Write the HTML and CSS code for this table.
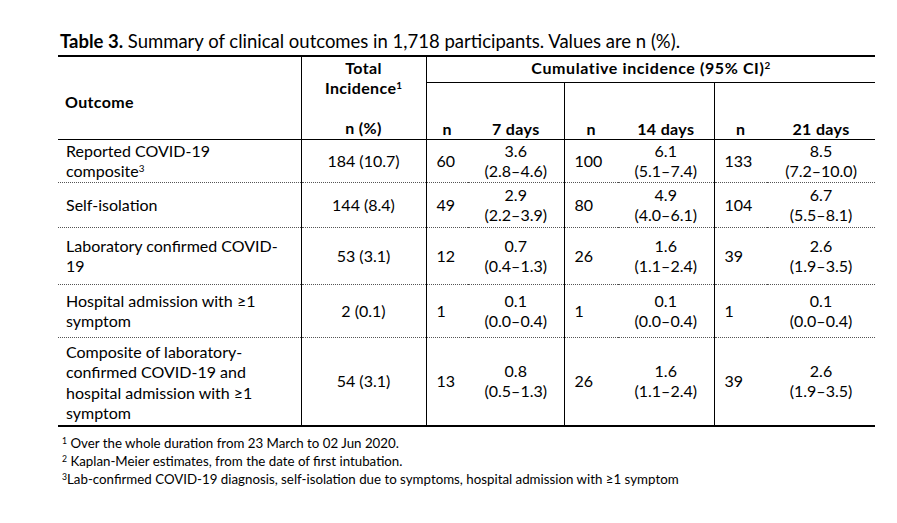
FILE: index.html
```html
<!DOCTYPE html>
<html lang="en">
<head>
<meta charset="utf-8">
<title>Table 3</title>
<link rel="stylesheet" href="styles.css">
</head>
<body>
<div class="page">
  <p class="caption"><b>Table 3.</b> Summary of clinical outcomes in 1,718 participants. Values are n (%).</p>
  <table class="outcomes">
    <colgroup>
      <col class="c-outcome">
      <col class="c-total">
      <col class="c-n7">
      <col class="c-d7">
      <col class="c-n14">
      <col class="c-d14">
      <col class="c-n21">
      <col class="c-d21">
    </colgroup>
    <thead>
      <tr class="h1">
        <th rowspan="2" class="th-outcome">Outcome</th>
        <th rowspan="2" class="th-total vl">Total<br>Incidence<sup>1</sup><br><br>n (%)</th>
        <th colspan="6" class="th-cum vl">Cumulative incidence (95% CI)<sup>2</sup></th>
      </tr>
      <tr class="h2">
        <th class="th-sub vl">n</th>
        <th class="th-sub">7 days</th>
        <th class="th-sub vl">n</th>
        <th class="th-sub">14 days</th>
        <th class="th-sub vl">n</th>
        <th class="th-sub">21 days</th>
      </tr>
    </thead>
    <tbody>
      <tr class="r1">
        <td class="name">Reported COVID-19<br>composite<sup>3</sup></td>
        <td class="total vl">184 (10.7)</td>
        <td class="n vl">60</td>
        <td class="ci">3.6<br>(2.8–4.6)</td>
        <td class="n vl">100</td>
        <td class="ci">6.1<br>(5.1–7.4)</td>
        <td class="n vl">133</td>
        <td class="ci">8.5<br>(7.2–10.0)</td>
      </tr>
      <tr class="r2">
        <td class="name">Self-isolation</td>
        <td class="total vl">144 (8.4)</td>
        <td class="n vl">49</td>
        <td class="ci">2.9<br>(2.2–3.9)</td>
        <td class="n vl">80</td>
        <td class="ci">4.9<br>(4.0–6.1)</td>
        <td class="n vl">104</td>
        <td class="ci">6.7<br>(5.5–8.1)</td>
      </tr>
      <tr class="r3">
        <td class="name">Laboratory confirmed COVID-<br>19</td>
        <td class="total vl">53 (3.1)</td>
        <td class="n vl">12</td>
        <td class="ci">0.7<br>(0.4–1.3)</td>
        <td class="n vl">26</td>
        <td class="ci">1.6<br>(1.1–2.4)</td>
        <td class="n vl">39</td>
        <td class="ci">2.6<br>(1.9–3.5)</td>
      </tr>
      <tr class="r4">
        <td class="name">Hospital admission with ≥1<br>symptom</td>
        <td class="total vl">2 (0.1)</td>
        <td class="n vl">1</td>
        <td class="ci">0.1<br>(0.0–0.4)</td>
        <td class="n vl">1</td>
        <td class="ci">0.1<br>(0.0–0.4)</td>
        <td class="n vl">1</td>
        <td class="ci">0.1<br>(0.0–0.4)</td>
      </tr>
      <tr class="r5">
        <td class="name name-tall">Composite of laboratory-<br>confirmed COVID-19 and<br>hospital admission with ≥1<br>symptom</td>
        <td class="total vl">54 (3.1)</td>
        <td class="n vl">13</td>
        <td class="ci">0.8<br>(0.5–1.3)</td>
        <td class="n vl">26</td>
        <td class="ci">1.6<br>(1.1–2.4)</td>
        <td class="n vl">39</td>
        <td class="ci">2.6<br>(1.9–3.5)</td>
      </tr>
    </tbody>
  </table>
  <div class="notes">
    <p><sup>1</sup> Over the whole duration from 23 March to 02 Jun 2020.</p>
    <p><sup>2</sup> Kaplan-Meier estimates, from the date of first intubation.</p>
    <p><sup>3</sup>Lab-confirmed COVID-19 diagnosis, self-isolation due to symptoms, hospital admission with ≥1 symptom</p>
  </div>
</div>
</body>
</html>
```

FILE: styles.css
```css
html, body {
  margin: 0;
  padding: 0;
  background: #ffffff;
}

body {
  font-family: Lato, "Liberation Sans", sans-serif;
  color: #000000;
}

.page {
  padding: 31px 0 0 58px;
}

.caption {
  margin: 0 0 3px 2px;
  font-size: 18.5px;
  line-height: 21px;
}

.outcomes {
  border-collapse: collapse;
  table-layout: fixed;
  width: 817px;
  font-size: 16px;
  line-height: 20px;
}

.c-outcome { width: 243px; }
.c-total { width: 125px; }
.c-n7 { width: 42px; }
.c-d7 { width: 96px; }
.c-n14 { width: 54px; }
.c-d14 { width: 96px; }
.c-n21 { width: 53px; }
.c-d21 { width: 108px; }

.outcomes th,
.outcomes td {
  padding: 0;
}

.outcomes th {
  letter-spacing: 0.35px;
}

.outcomes sup {
  font-size: 0.62em;
  line-height: 0;
  vertical-align: 0.55em;
  letter-spacing: 0;
}

.outcomes .vl {
  border-left: 1px solid #000000;
}

.outcomes .h1 th {
  border-top: 2px solid #000000;
  font-weight: 700;
}

.h1 {
  height: 26px;
}

.h2 {
  height: 57px;
}

.outcomes .th-outcome {
  text-align: left;
  vertical-align: middle;
  padding: 9px 0 0 7px;
  border-bottom: 1px solid #000000;
}

.outcomes .th-total {
  text-align: center;
  vertical-align: top;
  padding-top: 1px;
  border-bottom: 1px solid #000000;
}

.outcomes .th-cum {
  text-align: center;
  vertical-align: top;
  padding-top: 1px;
  border-bottom: 1px solid #000000;
  letter-spacing: 0.6px;
}

.outcomes .th-sub {
  text-align: center;
  vertical-align: bottom;
  font-weight: 700;
  border-bottom: 1px solid #000000;
}

.outcomes tbody td {
  border-bottom: 1px dotted #555555;
  vertical-align: middle;
  font-weight: 400;
}

.outcomes tbody tr:last-child td {
  border-bottom: 2px solid #000000;
}

.r1 { height: 43px; }
.r2 { height: 45px; }
.r3 { height: 57px; }
.r4 { height: 53px; }
.r5 { height: 89px; }

.outcomes .name {
  text-align: left;
  padding-left: 8px;
}

.outcomes .name-tall {
  line-height: 20.6px;
  padding-top: 3px;
}

.outcomes .total {
  text-align: center;
}

.outcomes .n {
  text-align: left;
  padding-left: 10px;
}

.outcomes .ci {
  text-align: center;
}

.notes {
  margin-top: 7px;
  padding-left: 4px;
  font-size: 13.3px;
  line-height: 18.2px;
}

.notes p {
  margin: 0;
}

.notes sup {
  font-size: 0.65em;
  line-height: 0;
  vertical-align: 0.5em;
}
```
